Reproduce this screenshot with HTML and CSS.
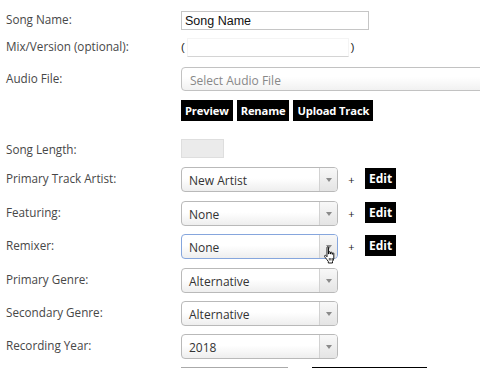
FILE: index.html
```html
<!DOCTYPE html>
<html>
<head>
<meta charset="utf-8">
<link rel="stylesheet" href="styles.css">
</head>
<body>
<div class="form">
  <div class="row r-name">
    <label class="lbl">Song Name:</label>
    <input class="txt" type="text" value="Song Name">
  </div>
  <div class="row r-mix">
    <label class="lbl">Mix/Version (optional):</label>
    <span class="paren">(</span><input class="mix" type="text"><span class="paren">)</span>
  </div>
  <div class="row r-audio">
    <label class="lbl">Audio File:</label>
    <div class="audio">Select Audio File</div>
  </div>
  <div class="row r-btns">
    <span class="lbl"></span>
    <div class="btns">
      <span class="btn">Preview</span>
      <span class="btn">Rename</span>
      <span class="btn">Upload Track</span>
    </div>
  </div>
  <div class="row r-len">
    <label class="lbl">Song Length:</label>
    <div class="len"></div>
  </div>
  <div class="row sel-row g9">
    <label class="lbl">Primary Track Artist:</label>
    <div class="sel"><span class="val">New Artist</span><span class="arr"></span></div>
    <span class="plus">+</span><span class="btn edit">Edit</span>
  </div>
  <div class="row sel-row g9">
    <label class="lbl">Featuring:</label>
    <div class="sel"><span class="val">None</span><span class="arr"></span></div>
    <span class="plus">+</span><span class="btn edit">Edit</span>
  </div>
  <div class="row sel-row g8">
    <label class="lbl">Remixer:</label>
    <div class="sel focus"><span class="val">None</span><span class="arr"></span>
      <svg class="cursor" width="14" height="18" viewBox="0 0 14 18">
        <path d="M4 1.5c0-.8 1.5-.8 1.5 0V8h.3V6.3c0-.8 1.5-.8 1.5 0V8h.3V6.8c0-.8 1.5-.8 1.5 0V8.3h.3V7.5c0-.8 1.4-.8 1.4 0v4.5c0 1.5-.7 2.5-1.3 3.5v1.5H5.3v-1.5C4.5 14.5 3.5 13 2.5 11.8 1.8 11 1.2 10 1.8 9.5c.6-.5 1.4.2 2.2 1.2z" fill="#fff" stroke="#000" stroke-width="0.9" stroke-linejoin="round"/>
        <path d="M6.3 12v2.5M7.8 12v2.5M9.3 12v2.5" stroke="#000" stroke-width="0.7"/>
      </svg>
    </div>
    <span class="plus">+</span><span class="btn edit">Edit</span>
  </div>
  <div class="row sel-row g9">
    <label class="lbl">Primary Genre:</label>
    <div class="sel"><span class="val">Alternative</span><span class="arr"></span></div>
  </div>
  <div class="row sel-row g8">
    <label class="lbl">Secondary Genre:</label>
    <div class="sel"><span class="val">Alternative</span><span class="arr"></span></div>
  </div>
  <div class="row sel-row g8">
    <label class="lbl">Recording Year:</label>
    <div class="sel"><span class="val">2018</span><span class="arr"></span></div>
  </div>
  <div class="row r-last">
    <span class="lbl"></span>
    <div class="last-in"></div>
    <div class="last-btn"></div>
  </div>
</div>
</body>
</html>
```

FILE: styles.css
```css
html, body {
  margin: 0;
  padding: 0;
  background: #fff;
  overflow: hidden;
}
body {
  width: 480px;
  height: 368px;
  font-family: "Open Sans", "Liberation Sans", sans-serif;
}
.form {
  padding: 11px 0 0 6px;
}
.row {
  display: flex;
  align-items: center;
  white-space: nowrap;
}
.lbl {
  width: 175px;
  flex: none;
  font-size: 11.7px;
  color: #474747;
  margin-top: -3px;
}
.r-len .lbl {
  margin-top: 0;
}
.txt {
  box-sizing: border-box;
  width: 188px;
  height: 19px;
  margin: 0;
  padding: 0 3px;
  border: 1px solid #c6c6c6;
  font-family: "Liberation Sans", Arial, sans-serif;
  font-size: 12.5px;
  color: #111;
  outline: none;
}
.r-mix {
  margin-top: 8px;
  height: 19px;
}
.paren {
  font-family: "Liberation Sans", Arial, sans-serif;
  font-size: 11px;
  color: #222;
  margin-top: -2px;
}
.mix {
  box-sizing: border-box;
  width: 162px;
  height: 19px;
  margin: 0 2px 0 2px;
  padding: 0;
  border: 1px solid #f4f4f4;
  border-bottom-color: #d4d4d4;
  outline: none;
}
.r-audio {
  margin-top: 10px;
}
.audio {
  box-sizing: border-box;
  width: 320px;
  height: 24px;
  border: 1px solid #c2c2c2;
  border-radius: 4px;
  background: linear-gradient(#fff 40%, #f1f1f1);
  font-size: 12px;
  color: #888;
  padding: 4px 0 0 8px;
  flex: none;
}
.r-btns {
  margin-top: 9px;
}
.btns {
  display: flex;
  gap: 4px;
}
.btn {
  background: #000;
  color: #fff;
  font-weight: bold;
  font-size: 11.2px;
  letter-spacing: -0.15px;
  height: 21px;
  line-height: 21px;
  padding: 0 4px;
  box-sizing: border-box;
}
.r-len {
  margin-top: 18px;
}
.len {
  box-sizing: border-box;
  width: 43px;
  height: 19px;
  background: #ebebeb;
  border: 1px solid #dedede;
}
.sel-row {
  height: 25px;
}
.g9 { margin-top: 9px; }
.g8 { margin-top: 8px; }
.sel {
  position: relative;
  box-sizing: border-box;
  width: 157px;
  height: 25px;
  border: 1px solid #b9b9b9;
  border-radius: 4px;
  background: linear-gradient(#fff 45%, #eeeeee);
  display: flex;
  align-items: center;
  flex: none;
}
.sel.focus {
  border-color: #86a6dd;
}
.val {
  flex: 1;
  font-size: 12px;
  color: #333;
  padding-left: 7px;
  margin-top: 1px;
}
.arr {
  width: 17px;
  height: 23px;
  border-left: 1px solid #d2d2d2;
  background: linear-gradient(#f8f8f8, #e4e4e4);
  border-radius: 0 3px 3px 0;
  position: relative;
}
.arr::after {
  content: "";
  position: absolute;
  left: 6px;
  top: 10px;
  border-left: 3px solid transparent;
  border-right: 3px solid transparent;
  border-top: 4px solid #8a8a8a;
}
.cursor {
  position: absolute;
  left: 141px;
  top: 11px;
}
.plus {
  width: 27px;
  text-align: center;
  font-size: 11px;
  color: #222;
}
.edit {
  width: 31px;
  padding: 0;
  text-align: center;
  margin-top: -2px;
  font-size: 12px;
  letter-spacing: 0;
}
.r-last {
  margin-top: 8px;
  align-items: flex-start;
  height: 1px;
}
.last-in {
  width: 107px;
  height: 0;
  border-top: 1px solid #aaa;
}
.last-btn {
  margin-left: 24px;
  width: 115px;
  height: 0;
  border-top: 2px solid #000;
}
```
